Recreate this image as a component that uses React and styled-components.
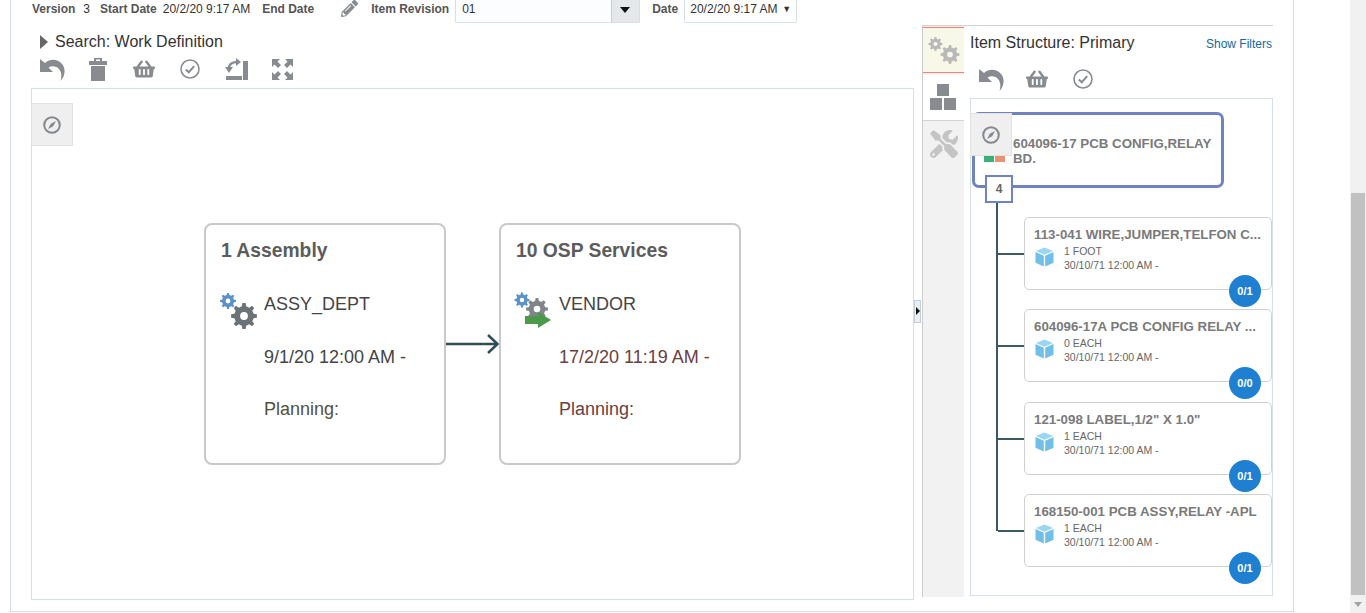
import React from 'react'
import styled, { createGlobalStyle } from 'styled-components'
import { FaPencilAlt, FaShoppingBasket, FaTools } from 'react-icons/fa'

const GlobalStyle = createGlobalStyle`
  html, body {
    margin: 0;
    padding: 0;
    height: 613px;
    overflow: hidden;
    background: #fff;
    font-family: "Liberation Sans", Arial, sans-serif;
    color: #333;
  }
`

const Page = styled.div`
  display: flex;
  width: 1366px;
  height: 613px;
  overflow: hidden;
`

const Main = styled.div`
  flex: 1;
  padding-left: 10px;
`

const Shell = styled.div`
  display: flex;
  flex-direction: column;
  width: 1284px;
  height: 612px;
  box-sizing: border-box;
  border: 1px solid #d6dfe6;
  border-top: 0;
`

const Scrollbar = styled.div`
  position: relative;
  width: 16px;
  height: 613px;
  background: #f1f1f1;

  &::before {
    content: '';
    position: absolute;
    left: 1px;
    right: 1px;
    top: 193px;
    height: 402px;
    background: #c1c1c1;
  }

  &::after {
    content: '';
    position: absolute;
    left: 4px;
    top: 602px;
    border: 4px solid transparent;
    border-top: 5px solid #a3a3a3;
    border-bottom: 0;
  }
`

const TopBar = styled.div`
  display: flex;
  align-items: flex-start;
  height: 23px;
  padding-left: 21px;
  font-size: 12px;
  flex: none;
`

const TopLabel = styled.span`
  font-weight: bold;
  color: #555;
  line-height: 18px;
  margin-left: ${p => p.$left || 0}px;
`

const TopValue = styled.span`
  color: #333;
  line-height: 18px;
  margin-left: ${p => p.$left || 0}px;
`

const PencilSlot = styled.span`
  display: flex;
  margin-left: 27px;
  color: #888c90;
  font-size: 17px;
`

const RevisionField = styled.div`
  display: flex;
  width: 185px;
  height: 23px;
  margin-left: 6px;
  box-sizing: border-box;
  border: 1px solid #d6dfe6;
  border-top: 0;
  border-radius: 0 0 2px 2px;
  background: #fbfdff;
`

const RevisionValue = styled.span`
  flex: 1;
  padding-left: 6px;
  line-height: 18px;
`

const RevisionButton = styled.span`
  position: relative;
  width: 27px;
  background: #e4e8ea;
  border-left: 1px solid #c4ced7;

  &::after {
    content: '';
    position: absolute;
    left: 8px;
    top: 7px;
    border: 5px solid transparent;
    border-top: 6px solid #111;
    border-bottom: 0;
  }
`

const DateSelect = styled.div`
  display: flex;
  justify-content: space-between;
  width: 113px;
  height: 23px;
  margin-left: 6px;
  padding: 0 5px;
  box-sizing: border-box;
  border: 1px solid #d6dfe6;
  border-top: 0;
  border-radius: 0 0 2px 2px;
  line-height: 18px;
`

const DateCaret = styled.span`
  font-size: 9px;
  color: #333;
`

const Body = styled.div`
  display: flex;
  flex: 1;
  padding-left: 20px;
`

const LeftPane = styled.div`
  width: 883px;
  flex: none;
`

const SearchHeader = styled.div`
  display: flex;
  align-items: center;
  height: 22px;
  margin-top: 8px;
  padding-left: 9px;
  font-size: 16px;
  color: #333;
`

const Disclosure = styled.span`
  width: 0;
  height: 0;
  margin-right: 7px;
  border: 7px solid transparent;
  border-left: 8px solid #666;
  border-right: 0;
`

const Toolbar = styled.div`
  display: flex;
  align-items: center;
  height: ${p => p.$height}px;
  margin-left: ${p => p.$left || 0}px;
  margin-top: ${p => p.$top || 0}px;
  color: #888c90;
`

const ToolSlot = styled.span`
  display: flex;
  justify-content: center;
  align-items: center;
  width: 46px;
  font-size: ${p => p.$size || 20}px;
`

const Canvas = styled.div`
  position: relative;
  height: 512px;
  margin-top: 6px;
  box-sizing: border-box;
  border: 1px solid #d6dfe6;
`

const CompassButton = styled.div`
  position: absolute;
  left: ${p => p.$left}px;
  top: ${p => p.$top}px;
  z-index: 2;
  display: flex;
  justify-content: center;
  align-items: center;
  width: 42px;
  height: 43px;
  box-sizing: border-box;
  background: #efefef;
  border: 1px solid #e2e2e2;
`

const FlowNode = styled.div`
  position: absolute;
  left: ${p => p.$left}px;
  top: 134px;
  width: 242px;
  height: 242px;
  box-sizing: border-box;
  border: 2px solid #c9c9c9;
  border-radius: 8px;
  background: #fff;
`

const NodeTitle = styled.div`
  position: absolute;
  left: 15px;
  top: 14px;
  font-size: 19.3px;
  line-height: 23px;
  font-weight: bold;
  color: #5c5c5c;
  white-space: nowrap;
`

const NodeIcon = styled.svg`
  position: absolute;
  left: 13px;
  top: 67px;
`

const NodeLines = styled.div`
  position: absolute;
  left: 58px;
  top: 53px;
  font-size: 18px;
  line-height: 52.5px;
  white-space: nowrap;
`

const NodeLine = styled.div`
  color: ${p => p.$color || '#444'};
`

const FlowArrow = styled.svg`
  position: absolute;
  left: 414px;
  top: 244px;
`

const Splitter = styled.div`
  position: relative;
  width: 8px;
  flex: none;
`

const SplitterHandle = styled.div`
  position: absolute;
  left: 0;
  top: 277px;
  width: 7px;
  height: 23px;
  box-sizing: border-box;
  background: #e9eff4;
  border: 1px solid #c4ced7;

  &::after {
    content: '';
    position: absolute;
    left: 1px;
    top: 6px;
    border: 4px solid transparent;
    border-left: 4px solid #111;
    border-right: 0;
  }
`

const RightPane = styled.div`
  display: flex;
  width: 351px;
  height: 572px;
  margin-top: 2px;
  box-sizing: border-box;
  border-top: 1px solid #d3d3d3;
`

const Tabs = styled.div`
  width: 42px;
  flex: none;
  box-sizing: border-box;
  background: #f2f2f2;
  border-left: 1px solid #ccc;
`

const Tab = styled.div`
  display: flex;
  justify-content: center;
  align-items: center;
  height: ${p => p.$height}px;
  box-sizing: border-box;
  color: #c4c4c4;
  font-size: 28px;
  ${p => p.$active && `
    background: #f8f8e9;
    border-top: 1px solid #f87c7c;
    border-bottom: 1px solid #f87c7c;
    margin-top: 1px;
  `}
  ${p => p.$white && `
    background: #fff;
    margin-top: 2px;
    border-bottom: 1px solid #d3d3d3;
  `}
`

const ItemPanel = styled.div`
  width: 303px;
  margin-left: 6px;
`

const PanelHeader = styled.div`
  display: flex;
  justify-content: space-between;
  align-items: center;
  height: 32px;
`

const PanelTitle = styled.span`
  font-size: 16px;
  color: #333;
  margin-top: 1px;
`

const FilterLink = styled.a`
  font-size: 12px;
  color: #14689f;
  padding-right: 1px;
  margin-top: 3px;
`

const Tree = styled.div`
  position: relative;
  height: 498px;
  margin-top: 6px;
  box-sizing: border-box;
  border: 1px solid #d6dfe6;
`

const RootNode = styled.div`
  position: relative;
  width: 252px;
  height: 76px;
  margin: 13px 0 0 1px;
  padding: 21px 0 0 38px;
  box-sizing: border-box;
  border: 3px solid #6e83c0;
  border-radius: 7px;
  font-size: 13.3px;
  line-height: 15px;
  font-weight: bold;
  color: #7a7a7a;
`

const StatusBar = styled.span`
  position: absolute;
  left: ${p => p.$left}px;
  top: 41px;
  width: 10px;
  height: 6px;
  background: ${p => p.$color};
`

const CountBox = styled.div`
  position: absolute;
  left: 10px;
  bottom: -18px;
  width: 28px;
  height: 28px;
  box-sizing: border-box;
  background: #fff;
  border: 2px solid #6e83c0;
  text-align: center;
  font-size: 12px;
  font-weight: bold;
  line-height: 24px;
  color: #666;
`

const ChildList = styled.div`
  position: relative;
  display: flex;
  flex-direction: column;
  gap: 19.4px;
  width: 248px;
  margin: 29px 0 0 53px;

  &::before {
    content: '';
    position: absolute;
    left: -28px;
    top: -14px;
    bottom: 36px;
    width: 2px;
    background: #3c5a64;
  }
`

const ChildCard = styled.div`
  position: relative;
  height: 73px;
  padding: 9px 9px 0;
  box-sizing: border-box;
  background: #fff;
  border: 1px solid #d0d0d0;
  border-radius: 5px;

  &::before {
    content: '';
    position: absolute;
    left: -27px;
    top: 35px;
    width: 26px;
    height: 2px;
    background: #3c5a64;
  }
`

const ChildTitle = styled.div`
  font-size: 13.3px;
  line-height: 16px;
  font-weight: bold;
  color: #7a7a7a;
  white-space: nowrap;
`

const ChildMeta = styled.div`
  display: flex;
  margin-top: 1px;
`

const CubeIcon = styled.svg`
  flex: none;
  margin: 3px 10px 0 1px;
`

const MetaText = styled.div`
  font-size: 10.5px;
  line-height: 14px;
  color: #666;
  white-space: nowrap;
`

const CountBadge = styled.div`
  position: absolute;
  right: 10px;
  bottom: -18px;
  width: 32px;
  height: 32px;
  border-radius: 50%;
  background: #1f7fd1;
  color: #fff;
  text-align: center;
  font-size: 11px;
  font-weight: bold;
  line-height: 32px;
`

// builds the toothed outline used by every gear in the picture
const gearPath = (cx, cy, r, teeth = 8) => {
  const points = []
  const inner = r * 0.76
  const step = (Math.PI * 2) / teeth
  const polar = (rad, ang) => `${(cx + rad * Math.cos(ang)).toFixed(2)} ${(cy + rad * Math.sin(ang)).toFixed(2)}`
  for (let i = 0; i < teeth; i++) {
    const a = i * step
    const w = step * 0.2
    points.push(polar(inner, a - w * 1.4), polar(r, a - w * 0.8), polar(r, a + w * 0.8), polar(inner, a + w * 1.4))
  }
  const hole = r * 0.3
  return `M${points.join('L')}Z M${cx - hole} ${cy}a${hole} ${hole} 0 1 0 ${hole * 2} 0a${hole} ${hole} 0 1 0 ${-hole * 2} 0Z`
}

const Gear = ({ cx, cy, r, color }) => <path d={gearPath(cx, cy, r)} fill={color} fillRule="evenodd" />

const UndoIcon = () => (
  <svg width="25" height="23" viewBox="0 0 25 23" fill="currentColor">
    <path d="M0 1V14H13L8.500 9.500C12 7.500 16.500 8 19 11C21.500 14 22 18 20.500 23C25 18.500 26 11.500 22.500 6.500C18.500 1 10.500 0 5 5Z" />
  </svg>
)

const TrashIcon = () => (
  <svg width="18" height="23" viewBox="0 0 18 23" fill="currentColor">
    <path d="M5 0H13V3H18V7H0V3H5ZM7 1.500V3H11V1.500ZM2 8H16V23H2Z" fillRule="evenodd" />
  </svg>
)

const CheckIcon = () => (
  <svg width="20" height="20" viewBox="0 0 20 20" fill="none" stroke="currentColor">
    <circle cx="10" cy="10" r="9" strokeWidth="1.6" />
    <path d="M5.800 10.400l3 2.800 5.400-6" strokeWidth="2" />
  </svg>
)

const CompassIcon = () => (
  <svg width="18" height="18" viewBox="0 0 18 18" fill="none">
    <circle cx="9" cy="9" r="7.800" stroke="#85898d" strokeWidth="2" />
    <path d="M13 5L10.200 10.200L5 13L7.800 7.800Z" fill="#85898d" />
  </svg>
)

const ReviseIcon = () => (
  <svg width="23" height="22" viewBox="0 0 23 22" fill="currentColor">
    <path d="M18 3H23V22H18ZM1 18H17V22H1Z" />
    <path d="M4 10C4 6 8 4 12 4" fill="none" stroke="currentColor" strokeWidth="2.500" />
    <path d="M11 0L16 4L11 8ZM0 9H8L4 15Z" />
  </svg>
)

const ExpandIcon = () => (
  <svg width="21" height="21" viewBox="0 0 21 21" fill="currentColor">
    <path d="M0 0H8L5.500 2.500L9 6L6 9L2.500 5.500L0 8Z" />
    <path d="M21 0H13L15.500 2.500L12 6L15 9L18.500 5.500L21 8Z" />
    <path d="M0 21H8L5.500 18.500L9 15L6 12L2.500 15.500L0 13Z" />
    <path d="M21 21H13L15.500 18.500L12 15L15 12L18.500 15.500L21 13Z" />
  </svg>
)

const CubesIcon = () => (
  <svg width="27" height="27" viewBox="0 0 27 27" fill="#888c90">
    <path d="M7 0h12v12H7zM0 14h12v12H0zM14 14h12v12H14z" />
  </svg>
)

const ItemCube = () => (
  <CubeIcon width="19" height="20" viewBox="0 0 19 20">
    <path d="M9.500 0.500L18 4L9.500 7.800L1 4Z" fill="#9ad5f2" />
    <path d="M0.500 5L8.800 8.800V19.500L0.500 15.800Z" fill="#6fbfe8" />
    <path d="M18.500 5L10.200 8.800V19.500L18.500 15.800Z" fill="#6fbfe8" />
  </CubeIcon>
)

const children = [
  { title: '113-041 WIRE,JUMPER,TELFON C...', qty: '1 FOOT', badge: '0/1' },
  { title: '604096-17A PCB CONFIG RELAY ...', qty: '0 EACH', badge: '0/0' },
  { title: '121-098 LABEL,1/2" X 1.0"', qty: '1 EACH', badge: '0/1' },
  { title: '168150-001 PCB ASSY,RELAY -APL', qty: '1 EACH', badge: '0/1' },
]

const App = () => (
  <Page>
    <GlobalStyle />
    <Main>
      <Shell>
        <TopBar>
          <TopLabel>Version</TopLabel>
          <TopValue $left={8}>3</TopValue>
          <TopLabel $left={10}>Start Date</TopLabel>
          <TopValue $left={6}>20/2/20 9:17 AM</TopValue>
          <TopLabel $left={12}>End Date</TopLabel>
          <PencilSlot><FaPencilAlt /></PencilSlot>
          <TopLabel $left={13}>Item Revision</TopLabel>
          <RevisionField>
            <RevisionValue>01</RevisionValue>
            <RevisionButton />
          </RevisionField>
          <TopLabel $left={12}>Date</TopLabel>
          <DateSelect>
            20/2/20 9:17 AM
            <DateCaret>▼</DateCaret>
          </DateSelect>
        </TopBar>
        <Body>
          <LeftPane>
            <SearchHeader>
              <Disclosure />
              Search: Work Definition
            </SearchHeader>
            <Toolbar $height={26} $left={-2} $top={3}>
              <ToolSlot><UndoIcon /></ToolSlot>
              <ToolSlot><TrashIcon /></ToolSlot>
              <ToolSlot $size={22}><FaShoppingBasket /></ToolSlot>
              <ToolSlot><CheckIcon /></ToolSlot>
              <ToolSlot><ReviseIcon /></ToolSlot>
              <ToolSlot><ExpandIcon /></ToolSlot>
            </Toolbar>
            <Canvas>
              <CompassButton $left={-1} $top={14}><CompassIcon /></CompassButton>
              <FlowNode $left={172}>
                <NodeTitle>1 Assembly</NodeTitle>
                <NodeIcon width="38" height="38" viewBox="0 0 38 38">
                  <Gear cx={9} cy={9} r={8} color="#5b93c9" />
                  <Gear cx={25} cy={24} r={13} color="#6b7278" />
                </NodeIcon>
                <NodeLines>
                  <NodeLine>ASSY_DEPT</NodeLine>
                  <NodeLine>9/1/20 12:00 AM -</NodeLine>
                  <NodeLine $color="#55503a">Planning:</NodeLine>
                </NodeLines>
              </FlowNode>
              <FlowArrow width="54" height="22" viewBox="0 0 54 22" fill="none" stroke="#2f4c57" strokeWidth="2.5">
                <path d="M0 11H51M42 2l9.500 9-9.500 9" />
              </FlowArrow>
              <FlowNode $left={467}>
                <NodeTitle>10 OSP Services</NodeTitle>
                <NodeIcon width="38" height="38" viewBox="0 0 38 38">
                  <Gear cx={8} cy={8} r={7.5} color="#5b93c9" />
                  <Gear cx={23} cy={17} r={11} color="#7f858a" />
                  <path d="M11 24H24V20L37 28L24 36V32H11Z" fill="#4a9a4a" />
                </NodeIcon>
                <NodeLines>
                  <NodeLine>VENDOR</NodeLine>
                  <NodeLine $color="#6a4040">17/2/20 11:19 AM -</NodeLine>
                  <NodeLine $color="#6a4040">Planning:</NodeLine>
                </NodeLines>
              </FlowNode>
            </Canvas>
          </LeftPane>
          <Splitter>
            <SplitterHandle />
          </Splitter>
          <RightPane>
            <Tabs>
              <Tab $active $height={46}>
                <svg width="33" height="28" viewBox="0 0 33 28">
                  <Gear cx={8.5} cy={8} r={7} color="#b9b9b9" />
                  <Gear cx={23} cy={18.5} r={9.5} color="#b9b9b9" />
                </svg>
              </Tab>
              <Tab $white $height={46}><CubesIcon /></Tab>
              <Tab $height={46}><FaTools /></Tab>
            </Tabs>
            <ItemPanel>
              <PanelHeader>
                <PanelTitle>Item Structure: Primary</PanelTitle>
                <FilterLink>Show Filters</FilterLink>
              </PanelHeader>
              <Toolbar $height={26} $left={-2} $top={8}>
                <ToolSlot><UndoIcon /></ToolSlot>
                <ToolSlot $size={22}><FaShoppingBasket /></ToolSlot>
                <ToolSlot><CheckIcon /></ToolSlot>
              </Toolbar>
              <Tree>
                <CompassButton $left={-1} $top={14}><CompassIcon /></CompassButton>
                <RootNode>
                  604096-17 PCB CONFIG,RELAY BD.
                  <StatusBar $left={9} $color="#3cae78" />
                  <StatusBar $left={20} $color="#e8956f" />
                  <CountBox>4</CountBox>
                </RootNode>
                <ChildList>
                  {children.map(item => (
                    <ChildCard key={item.title}>
                      <ChildTitle>{item.title}</ChildTitle>
                      <ChildMeta>
                        <ItemCube />
                        <MetaText>
                          {item.qty}
                          <br />
                          30/10/71 12:00 AM -
                        </MetaText>
                      </ChildMeta>
                      <CountBadge>{item.badge}</CountBadge>
                    </ChildCard>
                  ))}
                </ChildList>
              </Tree>
            </ItemPanel>
          </RightPane>
        </Body>
      </Shell>
    </Main>
    <Scrollbar />
  </Page>
)

export default App
